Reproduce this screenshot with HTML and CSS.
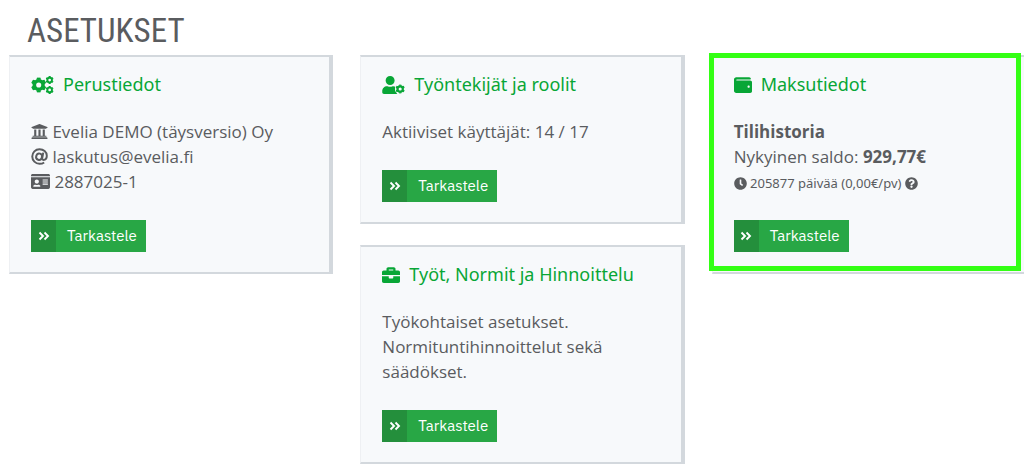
FILE: index.html
```html
<!DOCTYPE html>
<html lang="fi">
<head>
<meta charset="utf-8">
<meta name="viewport" content="width=device-width, initial-scale=1">
<title>Asetukset</title>
<link rel="stylesheet" href="styles.css">
</head>
<body>
<svg class="sprite" aria-hidden="true">
  <symbol id="gear" viewBox="-50 -50 100 100">
    <circle r="28" fill="none" stroke="currentColor" stroke-width="23"/>
    <g fill="currentColor">
      <path id="tooth" d="M-15-34-11-49H11L15-34z"/>
      <use href="#tooth" transform="rotate(60)"/>
      <use href="#tooth" transform="rotate(120)"/>
      <use href="#tooth" transform="rotate(180)"/>
      <use href="#tooth" transform="rotate(240)"/>
      <use href="#tooth" transform="rotate(300)"/>
    </g>
  </symbol>
  <symbol id="chevrons" viewBox="0 0 12 12">
    <path d="M1.500 2.500 5 6 1.500 9.500M6.500 2.500 10 6 6.500 9.500" fill="none" stroke="currentColor" stroke-width="1.900"/>
  </symbol>
</svg>
<main class="page">
  <h1 class="page-title">ASETUKSET</h1>
  <div class="columns">
    <div class="column">
      <section class="card">
        <h2 class="card-title">
          <svg class="icon icon-wide" viewBox="0 0 640 512" aria-hidden="true"><use href="#gear" x="-8" y="36" width="440" height="440"/><use href="#gear" x="408" y="0" width="232" height="232"/><use href="#gear" x="408" y="280" width="232" height="232"/></svg>
          Perustiedot
        </h2>
        <ul class="details">
          <li><svg class="icon" viewBox="0 0 512 512" aria-hidden="true"><path fill="currentColor" d="M496 128v16a8 8 0 0 1-8 8h-24v12c0 6.627-5.373 12-12 12H60c-6.627 0-12-5.373-12-12v-12H24a8 8 0 0 1-8-8v-16a8 8 0 0 1 4.941-7.392l232-88a7.996 7.996 0 0 1 6.118 0l232 88A8 8 0 0 1 496 128zm-24 304H40c-13.255 0-24 10.745-24 24v16a8 8 0 0 0 8 8h464a8 8 0 0 0 8-8v-16c0-13.255-10.745-24-24-24zM96 192v192H60c-6.627 0-12 5.373-12 12v20h416v-20c0-6.627-5.373-12-12-12h-36V192h-64v192h-64V192h-64v192h-64V192H96z"/></svg> Evelia DEMO (täysversio) Oy</li>
          <li><svg class="icon" viewBox="0 0 512 512" aria-hidden="true"><g fill="none" stroke="currentColor" stroke-width="60"><path d="M396 435C355 465 308 476 256 476 134 476 38 378 38 256S134 36 256 36c120 0 220 76 220 198 0 72-42 124-100 124-34 0-44-24-37-62l30-156"/><ellipse cx="244" cy="262" rx="88" ry="96" transform="rotate(18 244 262)"/></g></svg> laskutus@evelia.fi</li>
          <li><svg class="icon icon-card" viewBox="0 0 576 512" aria-hidden="true"><path fill="currentColor" fill-rule="evenodd" d="M528 32H48C21.500 32 0 53.500 0 80v16h576V80c0-26.500-21.500-48-48-48zM0 432c0 26.500 21.500 48 48 48h480c26.500 0 48-21.500 48-48V128H0v304zm352-232c0-4.400 3.600-8 8-8h144c4.400 0 8 3.600 8 8v16c0 4.400-3.600 8-8 8H360c-4.400 0-8-3.600-8-8v-16zm0 64c0-4.400 3.600-8 8-8h144c4.400 0 8 3.600 8 8v16c0 4.400-3.600 8-8 8H360c-4.400 0-8-3.600-8-8v-16zm0 64c0-4.400 3.600-8 8-8h144c4.400 0 8 3.600 8 8v16c0 4.400-3.600 8-8 8H360c-4.400 0-8-3.600-8-8v-16zM176 192c35.300 0 64 28.700 64 64s-28.700 64-64 64-64-28.700-64-64 28.700-64 64-64zM67.100 396.200C75.500 370.500 99.600 352 128 352h8.200c12.300 5.100 25.700 8 39.800 8s27.600-2.900 39.800-8h8.200c28.400 0 52.500 18.500 60.900 44.200 3.200 9.900-5.200 19.800-15.600 19.800H82.700c-10.400 0-18.800-10-15.600-19.800z"/></svg> 2887025-1</li>
        </ul>
        <button class="button" type="button"><span class="button-icon"><svg viewBox="0 0 12 12" aria-hidden="true"><use href="#chevrons"/></svg></span><span class="button-text">Tarkastele</span></button>
      </section>
    </div>
    <div class="column">
      <section class="card">
        <h2 class="card-title">
          <svg class="icon icon-wide" viewBox="0 0 640 512" aria-hidden="true"><path fill="currentColor" d="M224 256c70.700 0 128-57.300 128-128S294.700 0 224 0 96 57.300 96 128s57.300 128 128 128zM134.400 288h16.700a174 174 0 0 0 145.800 0h16.700c25 0 48 7 60 18l-5 115 60 80c-9 8-18 11-30 11H48c-26.500 0-48-21.500-48-48v-41.600C0 348.200 60.200 288 134.400 288z"/><circle class="icon-gap" cx="510" cy="370" r="148"/><use href="#gear" x="376" y="236" width="268" height="268"/></svg>
          Työntekijät ja roolit
        </h2>
        <p class="card-text">Aktiiviset käyttäjät: 14 / 17</p>
        <button class="button" type="button"><span class="button-icon"><svg viewBox="0 0 12 12" aria-hidden="true"><use href="#chevrons"/></svg></span><span class="button-text">Tarkastele</span></button>
      </section>
      <section class="card">
        <h2 class="card-title">
          <svg class="icon" viewBox="0 0 512 512" aria-hidden="true"><path fill="currentColor" d="M320 336c0 8.840-7.160 16-16 16h-96c-8.840 0-16-7.160-16-16v-48H0v144c0 25.600 22.400 48 48 48h416c25.600 0 48-22.400 48-48V288H320v48zm144-208h-80V80c0-25.600-22.400-48-48-48H176c-25.600 0-48 22.400-48 48v48H48c-25.600 0-48 22.400-48 48v80h512v-80c0-25.600-22.400-48-48-48zm-144 0H192V96h128v32z"/></svg>
          Työt, Normit ja Hinnoittelu
        </h2>
        <p class="card-text">Työkohtaiset asetukset. Normituntihinnoittelut sekä säädökset.</p>
        <button class="button" type="button"><span class="button-icon"><svg viewBox="0 0 12 12" aria-hidden="true"><use href="#chevrons"/></svg></span><span class="button-text">Tarkastele</span></button>
      </section>
    </div>
    <div class="column column-highlighted">
      <section class="card">
        <h2 class="card-title">
          <svg class="icon" viewBox="0 0 512 512" aria-hidden="true"><path fill="currentColor" d="M461.200 128H80c-8.840 0-16-7.160-16-16s7.160-16 16-16h384c8.840 0 16-7.160 16-16 0-26.510-21.490-48-48-48H64C28.650 32 0 60.650 0 96v320c0 35.350 28.650 64 64 64h397.200c28.020 0 50.800-21.530 50.800-48V176c0-26.470-22.780-48-50.800-48zM416 336c-17.670 0-32-14.330-32-32s14.330-32 32-32 32 14.330 32 32-14.330 32-32 32z"/></svg>
          Maksutiedot
        </h2>
        <ul class="details">
          <li><strong>Tilihistoria</strong></li>
          <li>Nykyinen saldo: <strong>929,77€</strong></li>
          <li><small class="small"><svg class="icon" viewBox="0 0 512 512" aria-hidden="true"><path fill="currentColor" d="M256 8C119 8 8 119 8 256s111 248 248 248 248-111 248-248S393 8 256 8zm92.490 313l-20 25a16 16 0 0 1-22.490 2.500l-67-49.720a40 40 0 0 1-15-31.230V112a16 16 0 0 1 16-16h32a16 16 0 0 1 16 16v144l58 42.500a16 16 0 0 1 2.490 22.500z"/></svg> 205877 päivää (0,00€/pv) <svg class="icon" viewBox="0 0 512 512" aria-hidden="true"><path fill="currentColor" d="M504 256c0 136.997-111.043 248-248 248S8 392.997 8 256C8 119.083 119.043 8 256 8s248 111.083 248 248zM262.655 90c-54.497 0-89.255 22.957-116.549 63.758-3.536 5.286-2.353 12.415 2.715 16.258l34.699 26.310c5.205 3.947 12.621 3.008 16.665-2.122 17.864-22.658 30.113-35.797 57.303-35.797 20.429 0 45.698 13.148 45.698 32.958 0 14.976-12.363 22.667-32.534 33.976C247.128 238.528 216 254.941 216 296v4c0 6.627 5.373 12 12 12h56c6.627 0 12-5.373 12-12v-1.333c0-28.462 83.186-29.647 83.186-106.667 0-58.002-60.165-102-116.531-102zM256 338c-25.365 0-46 20.635-46 46 0 25.364 20.635 46 46 46s46-20.636 46-46c0-25.365-20.635-46-46-46z"/></svg></small></li>
        </ul>
        <button class="button" type="button"><span class="button-icon"><svg viewBox="0 0 12 12" aria-hidden="true"><use href="#chevrons"/></svg></span><span class="button-text">Tarkastele</span></button>
      </section>
      <div class="highlight"></div>
    </div>
  </div>
</main>
</body>
</html>
```
FILE: styles.css
```css
* {
  box-sizing: border-box;
}

body {
  margin: 0;
  overflow: hidden;
  background: #fff;
  color: #5a5c5f;
  font: 17px/25px "Open Sans", "Noto Sans", sans-serif;
}

.sprite {
  position: absolute;
  width: 0;
  height: 0;
}

.page {
  padding: 9px 0 0 9px;
  margin-right: -12px;
}

.page-title {
  margin: 0;
  padding: 0 18px 2px;
  font: 400 33px/44px "Roboto Condensed", Roboto, sans-serif;
}

.columns {
  display: grid;
  grid-template-columns: repeat(3, minmax(0, 1fr));
  gap: 27px;
  align-items: start;
}

.column {
  display: flex;
  flex-direction: column;
  gap: 21px;
}

.column-highlighted {
  position: relative;
}

.card {
  padding: 14px 20px 20px 21px;
  border: 2px solid #d3d8dd;
  border-width: 2px 4px 2px 1px;
  border-left-color: #eef0f3;
  background: #f7f9fb;
}

.card-title {
  display: flex;
  align-items: center;
  gap: 9px;
  margin: 0 0 21px;
  color: #08a636;
  font-family: "Noto Sans", "Open Sans", sans-serif;
  font-size: 18px;
  font-weight: 400;
  line-height: 27px;
}

.icon {
  flex: none;
  width: 1em;
  height: 1em;
  vertical-align: -2px;
}

.card-title .icon {
  width: 18px;
  height: 18px;
}

.card-title .icon-wide {
  width: 23px;
}

.icon-card {
  width: 19px;
}

.icon-gap {
  fill: #f7f9fb;
}

.details,
.card-text {
  margin: 0 0 26px;
  padding: 0;
  list-style: none;
}

.small {
  font-family: "Noto Sans", "Open Sans", sans-serif;
  font-size: 13px;
  line-height: 1;
}

.button {
  display: flex;
  align-items: stretch;
  height: 32px;
  padding: 0;
  border: 0;
  background: #28a745;
  color: #fff;
  font: 15px/32px "IBM Plex Sans", Roboto, sans-serif;
}

.button-icon {
  display: flex;
  align-items: center;
  justify-content: center;
  width: 25px;
  background: #248f3c;
}

.button-icon svg {
  width: 12px;
  height: 12px;
}

.button-text {
  padding: 0 9px 0 11px;
}

.highlight {
  position: absolute;
  inset: -2px 15px 3px -3px;
  border: 5px solid #33ff14;
}
```
